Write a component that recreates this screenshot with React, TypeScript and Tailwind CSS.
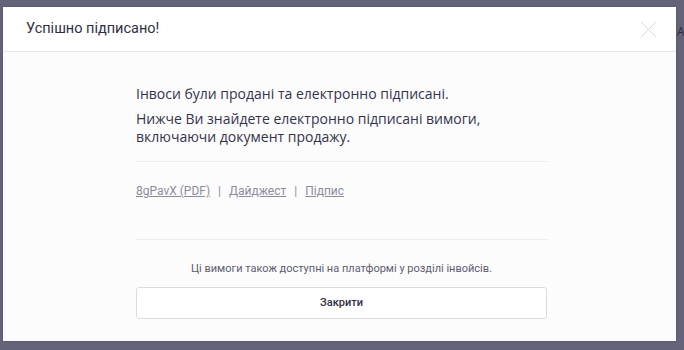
export default function App() {
  return (
    <div className="w-[684px] h-[350px] bg-[#64637a] pt-[7px] pl-[3px] relative overflow-hidden font-['Roboto',sans-serif]">
      <span className="absolute left-[677px] top-[23px] text-[12px] text-[#2c2c3c] font-['Open_Sans',sans-serif]">АН</span>
      <div className="w-[673px] h-[334px] bg-[#fcfcfc] flex flex-col shadow-[0_0_2px_rgba(0,0,0,0.2)]">
        <div className="h-[45px] bg-white border-b border-[#e6e6ea] flex items-center justify-between pl-[23px] pr-[19px]">
          <span className="text-[14.5px] text-[#2f2f45]">Успішно підписано!</span>
          <svg width="17" height="17" viewBox="0 0 17 17" className="text-[#d8d8dc]">
            <path d="M1 1L16 16M16 1L1 16" stroke="currentColor" strokeWidth="1" fill="none" />
          </svg>
        </div>
        <div className="ml-[133px] w-[411px] flex flex-col pt-[32px]">
          <p className="text-[14px] leading-[20px] text-[#33334d] font-['Open_Sans',sans-serif]">
            Інвоси були продані та електронно підписані.
          </p>
          <p className="mt-[6px] text-[14px] leading-[18px] text-[#33334d] font-['Open_Sans',sans-serif]">
            Нижче Ви знайдете електронно підписані вимоги,
            <br />
            включаючи документ продажу.
          </p>
          <div className="mt-[15px] border-t border-[#ececef]" />
          <div className="mt-[21px] flex items-center text-[12px] text-[#8d8d9c] leading-[16px]">
            <a className="underline">8gPavX (PDF)</a>
            <span className="mx-[8px]">|</span>
            <a className="underline">Дайджест</a>
            <span className="mx-[8px]">|</span>
            <a className="underline">Підпис</a>
          </div>
          <div className="mt-[40px] border-t border-[#ececef]" />
          <p className="mt-[22px] text-center text-[11px] leading-[14px] text-[#5c5c72]">
            Ці вимоги також доступні на платформі у розділі інвойсів.
          </p>
          <button className="mt-[11px] h-[32px] w-[411px] bg-white border border-[#dcdce0] rounded-[3px] text-[11px] font-medium text-[#2f2f45]">
            Закрити
          </button>
        </div>
      </div>
    </div>
  );
}
